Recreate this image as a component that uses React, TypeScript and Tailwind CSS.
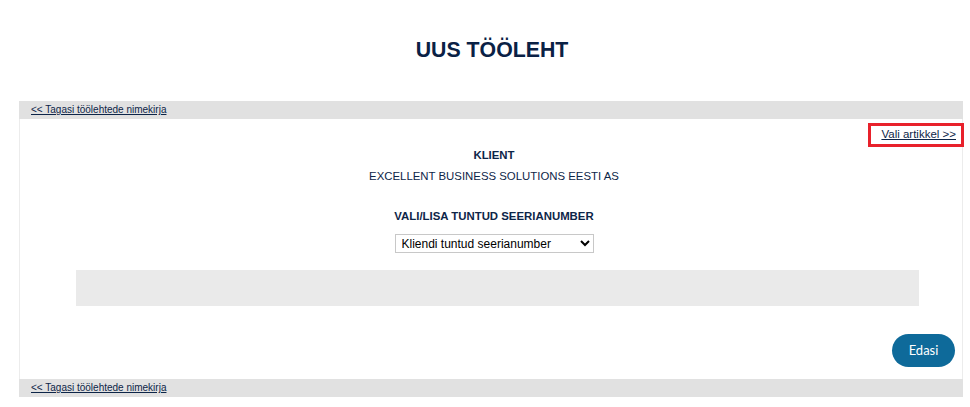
import React from 'react';

const navy = 'text-[#0d2548]';

function BackLink() {
  return (
    <div className="h-[18px] bg-[#e1e1e1] pl-3 flex items-center">
      <a href="#" className={`text-[10px] leading-none underline ${navy}`}>
        &lt;&lt; Tagasi töölehtede nimekirja
      </a>
    </div>
  );
}

export default function App() {
  return (
    <div className="min-h-[407px] bg-white font-['Liberation_Sans',Arial,sans-serif]">
      {/* Page title */}
      <div className="h-[101px] flex items-center justify-center pl-[14px] pt-[1px]">
        <h1 className="text-[21.3px] font-bold text-[#0a2145]">UUS TÖÖLEHT</h1>
      </div>

      <div className="ml-[19px] mr-[7px]">
        <BackLink />

        <div className="h-[260px] bg-white border-x border-[#ececec] flex flex-col">
          {/* Choose article */}
          <div className="flex justify-end mt-[4px] -mr-[2px]">
            <div className="h-[24px] border-[3px] border-[#e8212b] pl-[10px] pr-[5px] flex items-center">
              <a href="#" className={`text-[11.5px] leading-none underline ${navy}`}>
                Vali artikkel &gt;&gt;
              </a>
            </div>
          </div>

          {/* Client */}
          <div className={`flex flex-col items-center pl-[6px] ${navy}`}>
            <div className="text-[11.4px] font-bold leading-[16px]">KLIENT</div>
            <div className="mt-[5px] text-[11.4px] leading-[16px]">
              EXCELLENT BUSINESS SOLUTIONS EESTI AS
            </div>
            <div className="mt-[24px] text-[11.4px] font-bold leading-[16px]">
              VALI/LISA TUNTUD SEERIANUMBER
            </div>
            <select
              defaultValue="k"
              className="mt-[10px] w-[199px] h-[19px] border border-[#c8c8c8] bg-white text-[12px] text-black pl-[2px] leading-none"
            >
              <option value="k">Kliendi tuntud seerianumber</option>
            </select>
          </div>

          {/* Empty info area */}
          <div className="mt-[17px] ml-[56px] mr-[43px] h-[36px] bg-[#eaeaea]" />

          {/* Next */}
          <div className="mt-[28px] flex justify-end pr-[7px]">
            <button className="w-[63px] h-[33px] rounded-full bg-[#0e6a9a] text-white text-[13px] font-['Lato',sans-serif]">
              Edasi
            </button>
          </div>
        </div>

        <BackLink />
      </div>
    </div>
  );
}
